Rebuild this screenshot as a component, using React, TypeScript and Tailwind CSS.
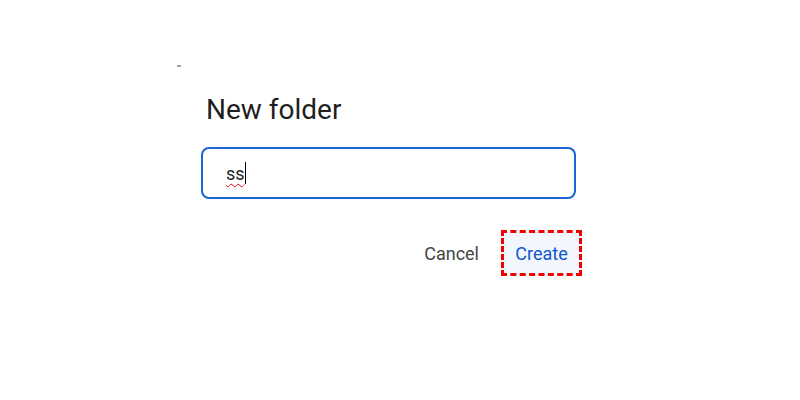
import React from "react";

export default function App() {
  return (
    <div className="h-[400px] w-[800px] bg-white font-['Roboto',sans-serif]">
      <div className="pl-[177px] pt-[65px]">
        <div className="h-[2px] w-[4px] bg-gray-400" />
      </div>
      <div className="ml-[201px] mt-[27px] flex w-[381px] flex-col">
        <h2 className="ml-[5px] text-[28px] leading-[32px] text-[#1f1f1f]">New folder</h2>
        <div className="mt-[21px] flex h-[52px] w-[375px] items-center rounded-[8px] border-2 border-[#1b66d2] pl-[23px]">
          <span className="text-[18px] text-[#1f1f1f] underline decoration-red-600 decoration-wavy decoration-1 underline-offset-[3px]">ss</span>
          <span className="h-[22px] w-[1px] bg-black" />
        </div>
        <div className="mt-[31px] flex items-center justify-end">
          <button className="mr-[22px] text-[18px] text-[#444746]">Cancel</button>
          <div className="flex h-[46px] w-[81px] items-center justify-center border-[3px] border-dashed border-[#f00000] bg-[#f3f6fc]">
            <span className="text-[18px] text-[#0b57d0]">Create</span>
          </div>
        </div>
      </div>
    </div>
  );
}
